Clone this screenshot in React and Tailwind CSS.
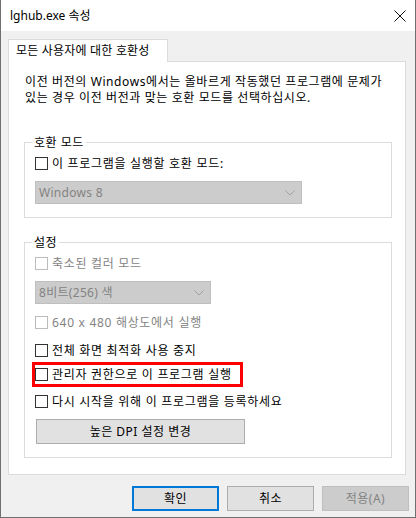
const font = { fontFamily: '"Noto Sans", "Noto Sans CJK KR", sans-serif' };

function CheckBox({ disabled }) {
  return (
    <span
      className={
        "inline-block w-[13px] h-[13px] shrink-0 border bg-white " +
        (disabled ? "border-[#bcbcbc]" : "border-[#333333]")
      }
    />
  );
}

function CheckRow({ label, disabled, className = "" }) {
  return (
    <div className={"flex items-center h-[17px] " + className}>
      <CheckBox disabled={disabled} />
      <span
        className={
          "ml-[4px] text-[12px] leading-[17px] tracking-[0.7px] whitespace-nowrap " +
          (disabled ? "text-[#838383]" : "text-black")
        }
      >
        {label}
      </span>
    </div>
  );
}

function Combo({ value, width, className = "" }) {
  return (
    <div
      className={
        "flex items-center justify-between h-[23px] border border-[#bfbfbf] bg-[#cccccc] pl-[3px] pr-[5px] " +
        className
      }
      style={{ width }}
    >
      <span className="text-[12px] leading-[17px] tracking-[0.3px] text-[#838383]">{value}</span>
      <svg width="10" height="6" viewBox="0 0 10 6" className="mr-[1px]">
        <path d="M0.5 0.5 L5 5 L9.5 0.5" fill="none" stroke="#a0a0a0" strokeWidth="1" />
      </svg>
    </div>
  );
}

function GroupBox({ title, className = "", children }) {
  return (
    <div className={"relative ml-[15px] w-[368px] border border-[#dcdcdc] px-[10px] " + className}>
      <span className="absolute -top-[9px] left-[7px] bg-white px-[2px] text-[12px] leading-[17px] tracking-[0.5px] text-black">
        {title}
      </span>
      {children}
    </div>
  );
}

function Button({ children, variant = "normal" }) {
  const styles = {
    normal: "border border-[#adadad] bg-[#e1e1e1] text-black",
    default: "border-2 border-[#0078d7] bg-[#e1e1e1] text-black",
    disabled: "border border-[#bfbfbf] bg-[#cccccc] text-[#838383]",
  };
  return (
    <div className={"flex items-center justify-center w-[87px] h-[25px] text-[12px] tracking-[0.5px] " + styles[variant]}>
      {children}
    </div>
  );
}

export default function App() {
  return (
    <div
      className="w-[416px] h-[518px] flex flex-col border-x border-b border-[#6f6f6f] bg-[#f0f0f0] text-black"
      style={font}
    >
      <div className="flex items-center justify-between h-[31px] bg-white pl-[9px] pr-[9px]">
        <span className="text-[12px] leading-[17px]">lghub.exe 속성</span>
        <svg width="12" height="12" viewBox="0 0 12 12">
          <path d="M0.5 0.5 L11.5 11.5 M11.5 0.5 L0.5 11.5" stroke="#111" strokeWidth="1" />
        </svg>
      </div>

      <div className="flex flex-col pt-[8px] pl-[7px]">
        <div className="relative z-10 -mb-px flex items-center h-[23px] w-[160px] border-x border-t border-[#dcdcdc] bg-white pl-[7px] text-[12px] tracking-[0.2px] whitespace-nowrap">
          모든 사용자에 대한 호환성
        </div>

        <div className="w-[398px] h-[414px] border border-[#dcdcdc] bg-white">
          <p className="pt-[12px] pl-[16px] text-[12px] leading-[16px] tracking-[0.6px] whitespace-nowrap">
            이전 버전의 Windows에서는 올바르게 작동했던 프로그램에 문제가
            <br />
            있는 경우 이전 버전과 맞는 호환 모드를 선택하십시오.
          </p>

          <GroupBox title="호환 모드" className="mt-[36px] h-[76px] pt-[12px]">
            <CheckRow label="이 프로그램을 실행할 호환 모드:" />
            <Combo value="Windows 8" width={267} className="mt-[9px]" />
          </GroupBox>

          <GroupBox title="설정" className="mt-[24px] h-[216px] pt-[12px]">
            <CheckRow label="축소된 컬러 모드" disabled />
            <Combo value="8비트(256) 색" width={176} className="mt-[9px]" />
            <CheckRow label="640 x 480 해상도에서 실행" disabled className="mt-[10px]" />
            <CheckRow label="전체 화면 최적화 사용 중지" className="mt-[11px]" />
            <div className="mt-[3px] -ml-[3px] w-[211px] h-[25px] border-[3px] border-[#ff0000] flex items-center">
              <CheckRow label="관리자 권한으로 이 프로그램 실행" />
            </div>
            <CheckRow label="다시 시작을 위해 이 프로그램을 등록하세요" className="mt-[6px]" />
            <div className="mt-[9px] ml-[1px] flex items-center justify-center w-[209px] h-[25px] border border-[#adadad] bg-[#e1e1e1] text-[12px] tracking-[0.5px]">
              높은 DPI 설정 변경
            </div>
          </GroupBox>
        </div>
      </div>

      <div className="flex justify-end gap-[8px] mt-[11px] pr-[6px]">
        <Button variant="default">확인</Button>
        <Button>취소</Button>
        <Button variant="disabled">적용(A)</Button>
      </div>
    </div>
  );
}
